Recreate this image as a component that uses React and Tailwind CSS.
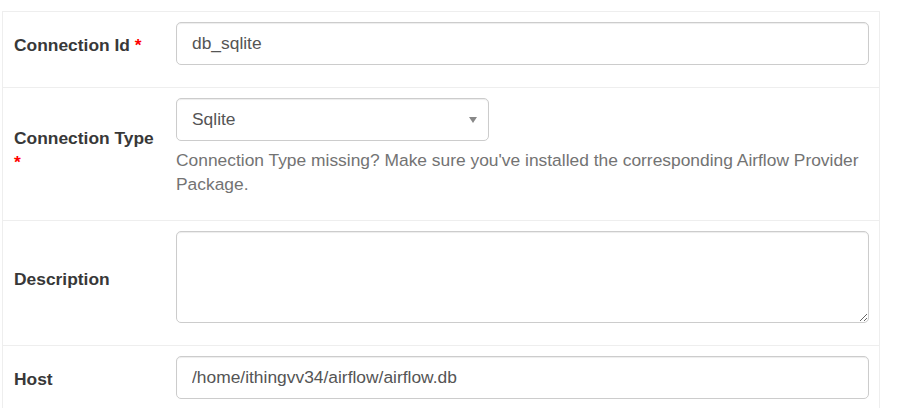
import React from "react";

const font = { fontFamily: '"Liberation Sans", Arial, sans-serif' };

function Label({ children, required }) {
  return (
    <div className="w-[163px] shrink-0 pl-[11px] pr-[10px] py-[10px] flex items-center">
      <div className="mb-[9px] text-[17.4px] leading-[24px] font-bold text-[#383838]">
        {children}
        {required && <span className="text-[#ff0000]"> *</span>}
      </div>
    </div>
  );
}

const inputCls =
  "block w-full h-[43px] rounded-[5px] border border-[#cccccc] bg-white px-[15px] text-[17.4px] text-[#555] shadow-[inset_0_1px_1px_rgba(0,0,0,0.075)] outline-none";

export default function App() {
  return (
    <div className="w-[897px] h-[408px] overflow-hidden bg-white pt-[11px]" style={font}>
      <div className="ml-[2px] w-[878px] border border-[#eeeeee] border-b-0">
        {/* Row 1 */}
        <div className="flex">
          <Label required>Connection Id</Label>
          <div className="w-[713px] pt-[10px] pb-[22px] px-[10px]">
            <input className={inputCls} style={font} defaultValue="db_sqlite" readOnly />
          </div>
        </div>
        {/* Row 2 */}
        <div className="flex border-t border-[#eeeeee]">
          <Label required>Connection Type</Label>
          <div className="w-[713px] pt-[10px] pb-[24px] px-[10px]">
            <div className="relative w-[313px]">
              <div className={inputCls + " flex items-center"} style={font}>
                Sqlite
              </div>
              <div className="absolute right-[12px] top-[19px] w-0 h-0 border-l-[4px] border-r-[4px] border-t-[6px] border-l-transparent border-r-transparent border-t-[#888]" />
            </div>
            <div className="mt-[7px] text-[17.4px] leading-[24px] text-[#737373]">
              Connection Type missing? Make sure you've installed the corresponding Airflow Provider Package.
            </div>
          </div>
        </div>
        {/* Row 3 */}
        <div className="flex border-t border-[#eeeeee]">
          <Label>Description</Label>
          <div className="w-[713px] pt-[10px] pb-[22px] px-[10px]">
            <textarea
              className="block w-full h-[92px] rounded-[5px] border border-[#cccccc] bg-white px-[15px] py-[8px] text-[17.4px] text-[#555] shadow-[inset_0_1px_1px_rgba(0,0,0,0.075)] outline-none"
              style={font}
              readOnly
            />
          </div>
        </div>
        {/* Row 4 */}
        <div className="flex border-t border-[#eeeeee]">
          <Label>Host</Label>
          <div className="w-[713px] pt-[10px] pb-[22px] px-[10px]">
            <input className={inputCls} style={font} defaultValue="/home/ithingvv34/airflow/airflow.db" readOnly />
          </div>
        </div>
      </div>
    </div>
  );
}
